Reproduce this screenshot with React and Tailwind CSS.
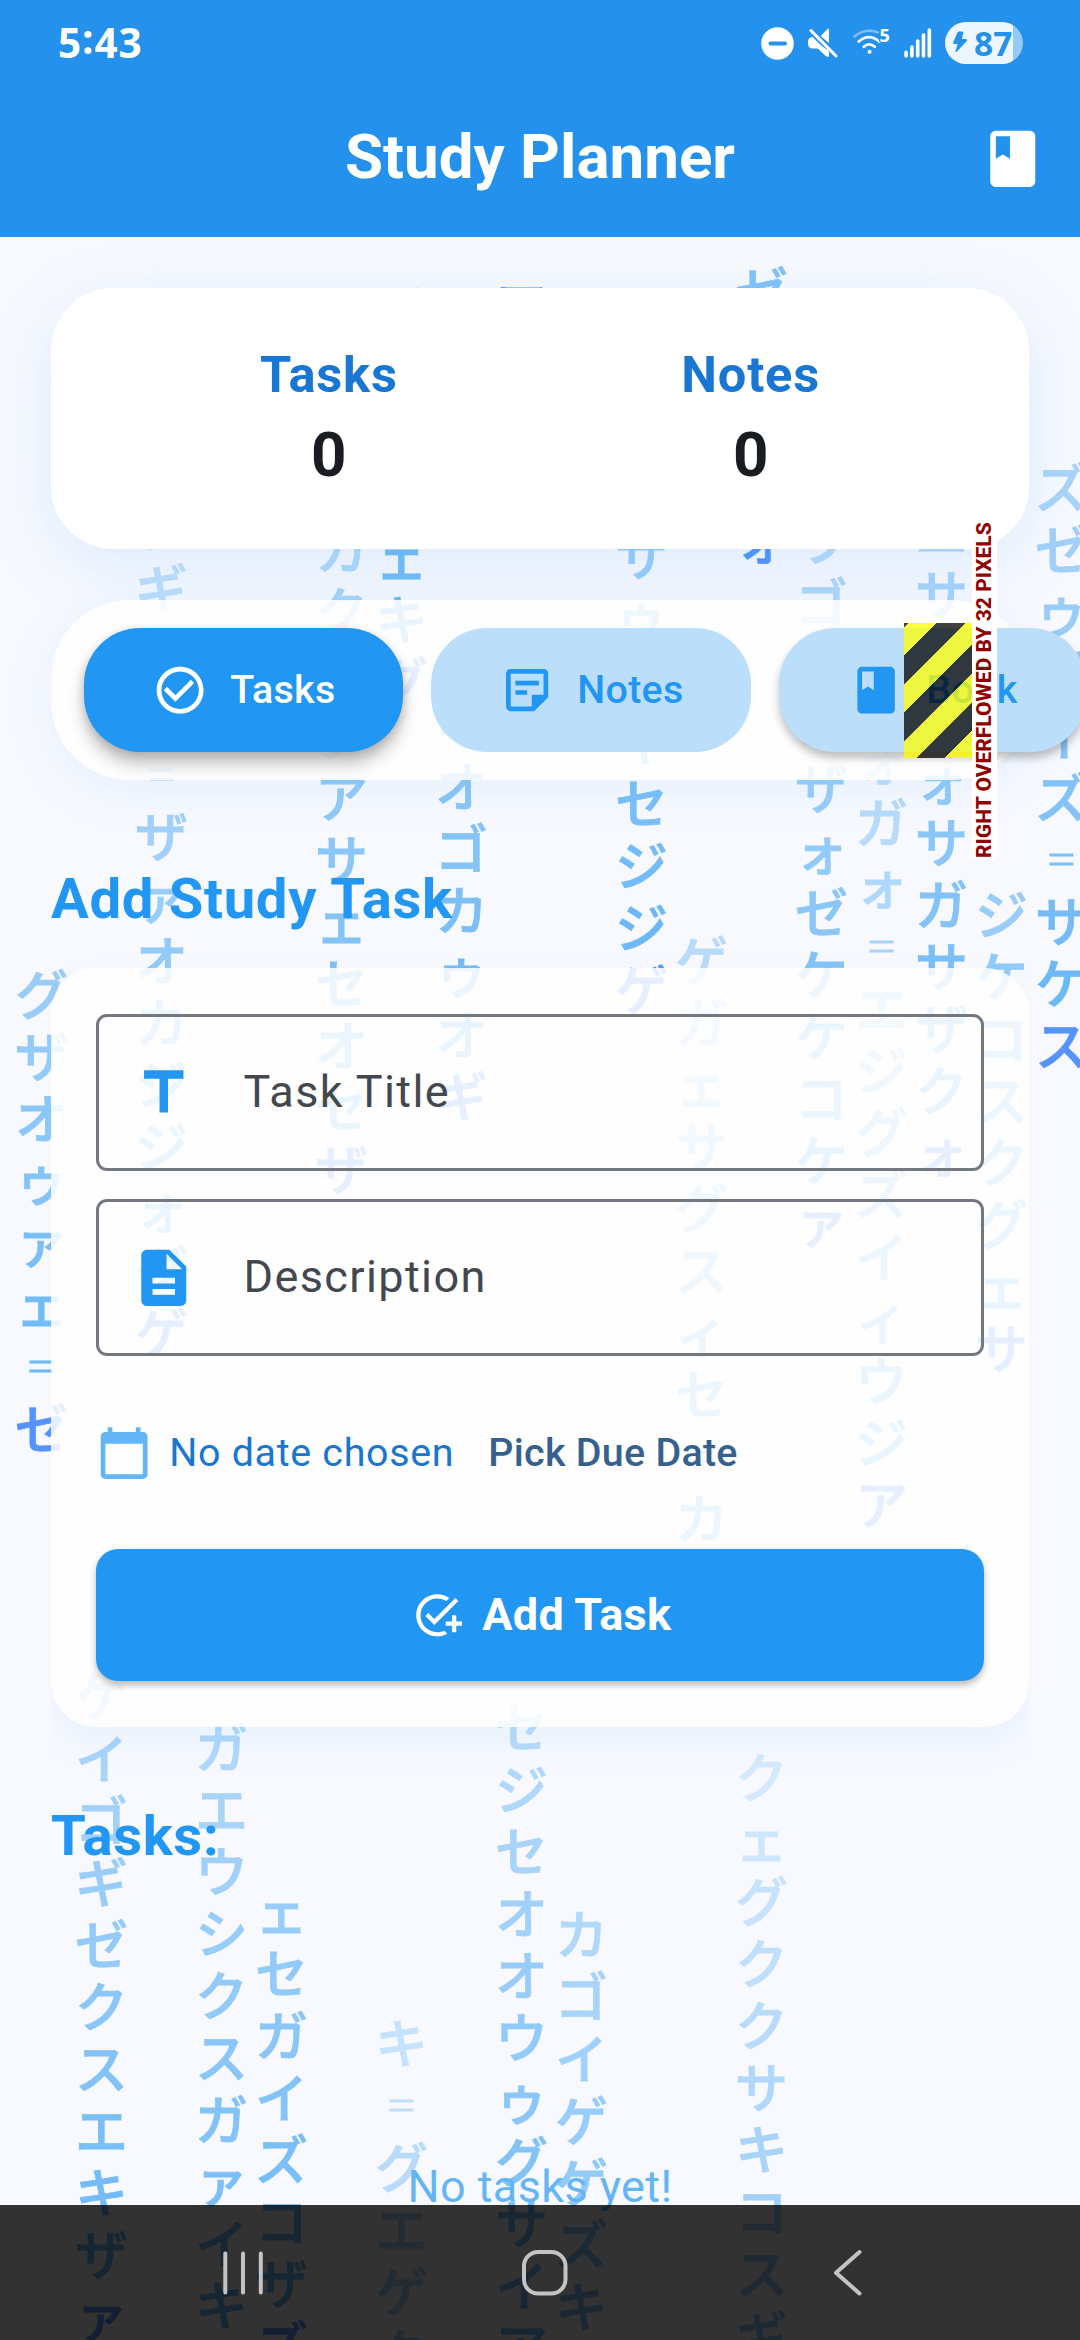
import React from "react";
import {
  MdClass,
  MdCheckCircleOutline,
  MdOutlineStickyNote2,
  MdTitle,
  MdDescription,
  MdCalendarToday,
  MdAddTask,
} from "react-icons/md";

// col: column index, y: centre of the first glyph, tail: rows between the first glyph and the bright head
const STREAMS = [
  { col: 0, y: 994, tail: 7, text: "グザオゥァェ゠ゼ" },
  { col: 1, y: 1696, tail: 10, text: "ケイゴギゼクスエキザァ" },
  { col: 2, y: 526, tail: 13, text: "クギサコ゠ザァオカジジォグゲ" },
  { col: 3, y: 1747, tail: 10, text: "ガエウシクスガァイキ" },
  { col: 4, y: 1911, tail: 7, text: "ェセガイズコザズ" },
  { col: 5, y: 549, tail: 10, text: "カクサクアサェセオセザ" },
  { col: 6, y: 309, tail: 6, text: "イサコスェキグ" },
  { col: 6, y: 2043, tail: 13, text: "キ゠グエゲク" },
  { col: 7, y: 724, tail: 6, text: "キオゴカゥオギ" },
  { col: 8, y: 306, tail: 0, text: "ア" },
  { col: 8, y: 1727, tail: 11, text: "セジセオオウゥグサイア" },
  { col: 9, y: 1934, tail: 10, text: "カゴイゲゲズキ" },
  { col: 10, y: 555, tail: 7, text: "サゥコキセジジゲ" },
  { col: 11, y: 960, tail: 11, text: "ゲガェサグスィセ゠カ" },
  { col: 12, y: 291, tail: 4, text: "ゼコサスォ" },
  { col: 12, y: 1777, tail: 15, text: "クェグククサキコスギ" },
  { col: 13, y: 540, tail: 11, text: "ウゴサコザォゼケケコケァ" },
  { col: 14, y: 760, tail: 12, text: "ォガォ゠エジグズイィウジア" },
  { col: 15, y: 532, tail: 10, text: "エサコスォサガサザクォ" },
  { col: 16, y: 914, tail: 7, text: "ジケコスクグェサ" },
  { col: 17, y: 487, tail: 9, text: "ズゼゥジイズ゠サケス" },
];

function glyphOpacity(distance) {
  return distance === 0 ? 0.9 : Math.max(0.08, 0.68 - 0.035 * distance);
}

function Stream({ col, y, tail, text }) {
  return (
    <div className="absolute flex w-[60px] flex-col items-center" style={{ left: 11.5 + col * 60, top: y - 33 }}>
      {[...text].map((glyph, i) => (
        <span
          key={i}
          className={`block h-[62px] text-[53px] leading-[62px] font-medium [-webkit-text-stroke-width:0.8px] ${
            i === tail ? "text-[#448aff]" : "text-[#2196f3]"
          }`}
          style={{ opacity: glyphOpacity(tail - i) }}
        >
          {glyph}
        </span>
      ))}
    </div>
  );
}

function KanaRain() {
  return (
    <div className="absolute inset-0 overflow-hidden font-['Noto_Sans_CJK_JP',sans-serif]" aria-hidden="true">
      {STREAMS.map((s) => (
        <Stream key={`${s.col}-${s.y}`} {...s} />
      ))}
    </div>
  );
}

function StatusIcons() {
  return (
    <div className="flex items-center">
      <svg className="h-[33px] w-[33px]" viewBox="0 0 33 33">
        <circle cx="16.5" cy="16.5" r="16.3" fill="#fff" />
        <rect x="7.5" y="14.6" width="18.5" height="4" rx="2" fill="#2492ec" />
      </svg>
      <svg className="ml-[13px] h-[32px] w-[32px]" viewBox="0 0 32 32">
        <path
          d="M1 15.2Q1 10 6 10H9.5L21.5 22.5V30Q19 29.5 17.5 27.7L11 21.5H6Q1 21.5 1 16.5zM13.5 9.2L20 2.5Q21.5 1 22 2V16z"
          fill="#fff"
        />
        <path d="M4.3 4L29 29" stroke="#2492ec" strokeWidth="6.5" />
        <path d="M21.9 24V29.5Q19.5 29.7 17.5 27.7L9 19.5V15z" fill="#fff" />
        <path d="M4 3.6L29 29" stroke="#fff" strokeWidth="3" strokeLinecap="round" />
      </svg>
      <svg className="ml-[13px] h-[32px] w-[38px]" viewBox="0 0 38 32">
        <g fill="none" stroke="#fff" strokeWidth="2.6" strokeLinecap="round">
          <path d="M2.5 9.5Q13 0.5 26.5 5.6" opacity=".42" />
          <path d="M6.7 14.6Q17 5.6 27.3 14.6" />
          <path d="M11.7 19.8Q17 15 22.8 19.8" />
        </g>
        <circle cx="17.6" cy="24.8" r="2" fill="#fff" />
        <rect x="27" y="0" width="11" height="15" fill="#2492ec" />
        <text x="27.6" y="14.8" fontSize="18" fontWeight="700" fontFamily="Open Sans, sans-serif" fill="#fff">
          5
        </text>
      </svg>
      <svg className="ml-[14px] h-[30px] w-[28px]" viewBox="0 0 28 30" fill="#fff">
        <rect x="0.3" y="22.5" width="3.6" height="7.2" rx="1.8" />
        <rect x="6.1" y="17.3" width="3.6" height="12.4" rx="1.8" />
        <rect x="11.9" y="11.3" width="3.6" height="18.4" rx="1.8" />
        <rect x="17.7" y="5.3" width="3.6" height="24.4" rx="1.8" />
        <rect x="23.5" y="0.3" width="3.6" height="29.4" rx="1.8" />
      </svg>
      <div className="ml-[13px] flex h-[42px] w-[78px] items-center rounded-full bg-[linear-gradient(90deg,#edf6fe_68px,#95c9f6_68px)] pl-[7px]">
        <svg className="h-[24px] w-[16px]" viewBox="0 0 16 24">
          <path
            d="M5.5 1.5Q6 .5 7 .5H10.5Q11.7 .7 11.3 2L9.8 8H14Q15.8 8.3 14.8 10L5 20.5Q3.4 21.8 3.4 20.2L5.7 13H2Q.5 12.8 1.3 11z"
            fill="#2492ec"
          />
        </svg>
        <span className="ml-[6px] font-['Open_Sans',sans-serif] text-[33.5px] leading-[42px] font-bold text-[#2492ec]">
          87
        </span>
      </div>
    </div>
  );
}

function AppHeader() {
  return (
    <header className="relative h-[237px] bg-[#2492ec] text-white">
      <div className="flex h-[86px] items-center justify-between pr-[57px] pl-[58px]">
        <span className="flex font-['Open_Sans',sans-serif] text-[40.5px] leading-[86px] font-bold tracking-[0.9px]">
          5<span className="pb-[8px] leading-[78px]">:</span>43
        </span>
        <StatusIcons />
      </div>
      <div className="grid h-[145px] grid-cols-[160px_1fr_160px] items-center">
        <span />
        <h1 className="pb-[4px] text-center text-[61.9px] leading-[72px] font-bold">Study Planner</h1>
        <MdClass className="mr-[34px] size-[67.5px] justify-self-end" />
      </div>
    </header>
  );
}

function Counter({ label, value }) {
  return (
    <div className="flex flex-col items-center">
      <span className="text-[50.6px] leading-[72px] font-bold tracking-[0.8px] text-[#1976d2]">{label}</span>
      <span className="mt-[6px] text-[61.9px] leading-[76px] font-bold text-[#191c20]">{value}</span>
    </div>
  );
}

function OverflowMarker() {
  return (
    <div className="absolute top-[23px] left-[853px] flex h-[135px] items-center">
      <div className="h-full w-[68px] bg-[repeating-linear-gradient(135deg,rgba(0,0,0,0.75)_0_3px,rgba(255,255,0,0.75)_3px_23.2px,rgba(0,0,0,0.75)_23.2px_40.4px)]" />
      <div className="flex h-[337px] w-[25px] rotate-180 items-center justify-center bg-white text-[21px] leading-[25px] font-extrabold whitespace-nowrap text-[#900000] [writing-mode:vertical-rl]">
        RIGHT OVERFLOWED BY 32 PIXELS
      </div>
    </div>
  );
}

function Tab({ icon: Icon, label, className }) {
  return (
    <button
      className={`flex h-[124px] shrink-0 items-center justify-center gap-[22.5px] rounded-[56px] text-[39.4px] leading-[56px] font-medium tracking-[0.28px] ${className}`}
    >
      <Icon className="size-[56.25px]" />
      {label}
    </button>
  );
}

function Field({ icon: Icon, label }) {
  return (
    <div className="flex h-[157px] items-center rounded-[11px] border-[3px] border-[#73777f] pl-[31px]">
      <Icon className="size-[67.5px] text-[#2196f3]" />
      <span className="ml-[46px] pb-[2px] text-[45px] leading-[67px] tracking-[1.4px] text-[#43474e]">{label}</span>
    </div>
  );
}

function NavBar() {
  return (
    <nav className="absolute inset-x-0 bottom-0 h-[135px] bg-black/80">
      <svg className="h-full w-full" viewBox="0 0 1080 135" fill="none" stroke="#c4c4c4" strokeLinecap="round">
        <path d="M225.3 48.5V87.5M243 48.5V87.5M260.8 48.5V87.5" strokeWidth="4" />
        <rect x="524" y="47" width="41.5" height="41.5" rx="14" strokeWidth="4" />
        <path d="M859.5 47L836 67.8L859.5 88.5" strokeWidth="4" strokeLinejoin="round" />
      </svg>
    </nav>
  );
}

export default function App() {
  return (
    <div className="relative h-[2340px] w-[1080px] overflow-hidden bg-[#f8f9ff] font-['Roboto',sans-serif]">
      <KanaRain />
      <AppHeader />
      <main className="relative flex flex-col px-[51px] pt-[51px]">
        <section className="flex h-[261px] justify-between rounded-[62px] bg-white pt-[51px] pr-[209px] pl-[209px] shadow-[0_17px_68px_rgba(33,150,243,0.13)]">
          <Counter label="Tasks" value="0" />
          <Counter label="Notes" value="0" />
        </section>

        <div className="relative mt-[51px] flex h-[180px] items-center gap-[28px] rounded-[79px] bg-white/85 pl-[33px] shadow-[0_11px_50px_rgba(33,150,243,0.09)]">
          <Tab
            icon={MdCheckCircleOutline}
            label="Tasks"
            className="w-[319px] bg-[#2196f3] text-white shadow-[0_12px_16px_rgba(0,0,0,0.24),0_2px_10px_rgba(0,0,0,0.14)]"
          />
          <Tab icon={MdOutlineStickyNote2} label="Notes" className="w-[320px] bg-[#bbdefb] text-[#2196f3]" />
          <Tab
            icon={MdClass}
            label="Book"
            className="w-[307px] bg-[#bbdefb] text-[#2196f3] shadow-[0_6px_9px_rgba(0,0,0,0.25)]"
          />
          <OverflowMarker />
        </div>

        <h2 className="mt-[85px] text-[56.25px] leading-[68px] font-bold tracking-[0.65px] text-[#2196f3]">
          Add Study Task
        </h2>

        <section className="mt-[35px] flex h-[759px] flex-col rounded-[45px] bg-white/85 px-[45px] pt-[46px] shadow-[0_17px_34px_rgba(33,150,243,0.07)] [clip-path:inset(-60px_0)]">
          <Field icon={MdTitle} label="Task Title" />
          <div className="h-[28px]" />
          <Field icon={MdDescription} label="Description" />
          <div className="mt-[62px] flex h-[70px] items-center text-[39.4px] leading-[56px]">
            <MdCalendarToday className="size-[56.25px] text-[#64b5f6]" />
            <span className="ml-[17px] tracking-[0.7px] text-[#1976d2]">No date chosen</span>
            <span className="ml-[34px] font-medium tracking-[0.28px] text-[#36618e]">Pick Due Date</span>
          </div>
          <button className="mt-[61px] flex h-[132px] items-center justify-center gap-[20px] rounded-[22px] bg-[#2196f3] pl-[3px] text-[45px] leading-[60px] font-bold tracking-[0.28px] text-white shadow-[0_4px_7px_rgba(0,0,0,0.28)]">
            <MdAddTask className="size-[50.6px]" />
            Add Task
          </button>
        </section>

        <h2 className="mt-[75px] text-[56.25px] leading-[68px] font-bold tracking-[0.65px] text-[#2196f3]">Tasks:</h2>
        <p className="mt-[283px] text-center text-[45px] leading-[68px] tracking-[0.4px] text-[#64b5f6]">No tasks yet!</p>
      </main>
      <NavBar />
    </div>
  );
}
